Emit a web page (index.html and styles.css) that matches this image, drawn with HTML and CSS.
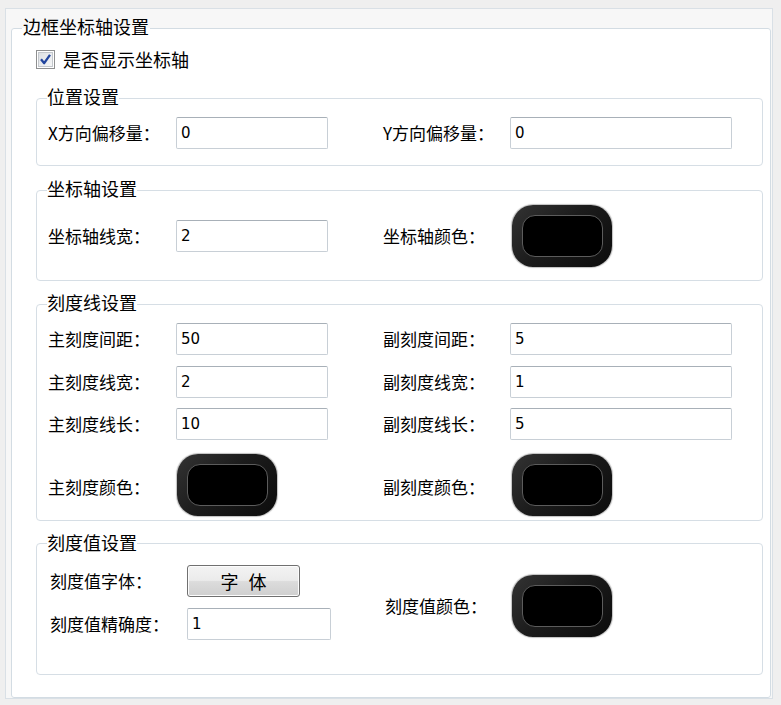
FILE: index.html
```html
<!DOCTYPE html>
<html lang="zh-CN">
<head>
<meta charset="utf-8">
<title>边框坐标轴设置</title>
<link rel="stylesheet" href="styles.css">
</head>
<body>
<div class="panel">
  <fieldset class="outer">
    <legend class="outer-title">边框坐标轴设置</legend>
    <label class="check">
      <svg class="check-box" width="19" height="19" viewBox="0 0 19 19" aria-hidden="true">
        <defs>
          <linearGradient id="cg" x1="0" y1="0" x2="1" y2="1">
            <stop offset="0" stop-color="#dcdfe3"/>
            <stop offset="1" stop-color="#f6f7f8"/>
          </linearGradient>
        </defs>
        <rect x="0.5" y="0.5" width="18" height="18" fill="#fff" stroke="#8e8f90"/>
        <rect x="2.5" y="2.5" width="14" height="14" fill="url(#cg)" stroke="#c3c7cc"/>
        <path d="M5 9.3 L8.2 13.2 L14 4.8" fill="none" stroke="#22459e" stroke-width="2.3" stroke-linejoin="round"/>
      </svg>
      <span>是否显示坐标轴</span>
    </label>

    <fieldset class="group g1">
      <legend class="group-title">位置设置</legend>
      <div class="grid">
        <span class="lbl">X方向偏移量：</span><input class="in" type="text" value="0">
        <span class="lbl">Y方向偏移量：</span><input class="in wide" type="text" value="0">
      </div>
    </fieldset>

    <fieldset class="group g2">
      <legend class="group-title">坐标轴设置</legend>
      <div class="grid grid-c">
        <span class="lbl">坐标轴线宽：</span><input class="in" type="text" value="2">
        <span class="lbl">坐标轴颜色：</span><div class="cbtn"><div class="cbtn-in"></div></div>
      </div>
    </fieldset>

    <fieldset class="group g3">
      <legend class="group-title">刻度线设置</legend>
      <div class="grid grid-3">
        <span class="lbl">主刻度间距：</span><input class="in" type="text" value="50">
        <span class="lbl">副刻度间距：</span><input class="in wide" type="text" value="5">
        <span class="lbl">主刻度线宽：</span><input class="in" type="text" value="2">
        <span class="lbl">副刻度线宽：</span><input class="in wide" type="text" value="1">
        <span class="lbl">主刻度线长：</span><input class="in" type="text" value="10">
        <span class="lbl">副刻度线长：</span><input class="in wide" type="text" value="5">
        <span class="lbl lbl-c">主刻度颜色：</span><div class="cbtn cbtn-l"><div class="cbtn-in"></div></div>
        <span class="lbl lbl-c">副刻度颜色：</span><div class="cbtn cbtn-r"><div class="cbtn-in"></div></div>
      </div>
    </fieldset>

    <fieldset class="group g4">
      <legend class="group-title">刻度值设置</legend>
      <div class="grid4">
        <span class="lbl l4">刻度值字体：</span><button class="fbtn" type="button">字 体</button>
        <span class="lbl l4 r-span">刻度值颜色：</span><div class="cbtn r-span c4"><div class="cbtn-in"></div></div>
        <span class="lbl l4">刻度值精确度：</span><input class="in in4" type="text" value="1">
      </div>
    </fieldset>
  </fieldset>
</div>
</body>
</html>
```

FILE: styles.css
```css
html, body {
  margin: 0;
  padding: 0;
}
body {
  background: #efefef;
  font-family: "Noto Sans CJK SC", "Noto Sans", sans-serif;
  color: #000;
  width: 781px;
  height: 705px;
  overflow: hidden;
}
.panel {
  margin: 8px 8px 0 5px;
  border: 1px solid #d9e0e6;
  background: #f7f7f7;
}
fieldset {
  margin: 0;
  min-width: 0;
}
.outer {
  margin: 7px 1px 0 5px;
  border: 1px solid #d3dce3;
  border-radius: 3px;
  padding: 0 7px 22px 24px;
  background: #fff;
}
.outer-title {
  font-size: 18px;
  line-height: 20px;
  padding: 0 1px 4px;
  margin-left: -14px;
  color: #000;
}
.check {
  display: flex;
  align-items: center;
  gap: 8px;
  height: 20px;
  margin-top: 9px;
  font-size: 18px;
  line-height: 20px;
}
.check-box {
  display: block;
  flex: none;
}
.group {
  border: 1px solid #d6dee5;
  border-radius: 4px;
  padding: 0 7px 16px 11px;
}
.group-title {
  font-size: 18px;
  line-height: 20px;
  padding: 0 0 4px;
  margin-left: -1px;
  color: #000;
}
.g1 { margin-top: 17px; }
.g2 { margin-top: 12px; padding-bottom: 13px; }
.g3 { margin-top: 11px; padding-bottom: 4px; }
.g4 { margin-top: 11px; padding-bottom: 34px; }

.grid {
  display: grid;
  grid-template-columns: 128px 207px 127px 222px;
  grid-auto-rows: 32px;
  align-items: center;
  margin-top: 7px;
}
.grid-c {
  grid-auto-rows: 62px;
  margin-top: 3px;
}
.grid-3 {
  grid-template-rows: 32px 32px 32px 65px;
  row-gap: 10.5px;
}
.lbl {
  font-size: 17px;
  line-height: 20px;
  white-space: nowrap;
  color: #000;
}
.lbl-c {
  align-self: center;
  margin-top: 7px;
}
.in {
  box-sizing: border-box;
  width: 152px;
  height: 32px;
  margin: 0;
  padding: 0 4px;
  border: 1px solid #c8cfd6;
  border-top-color: #a8b0b8;
  border-radius: 2px;
  background: #fff;
  font-family: "DejaVu Sans", "Liberation Sans", sans-serif;
  font-size: 15px;
  color: #000;
  outline: none;
}
.in.wide { width: 222px; }

.cbtn {
  box-sizing: border-box;
  width: 100px;
  height: 62px;
  padding: 10px 9px 10px 10px;
  border-radius: 21px;
  background: linear-gradient(135deg, #333 0%, #1c1c1c 45%, #0c0c0c 100%);
  box-shadow: 0 0 1px 1px rgba(0, 0, 0, 0.25);
  margin-left: 1px;
}
.cbtn-in {
  box-sizing: border-box;
  height: 100%;
  border: 1px solid #5c5c5c;
  border-radius: 13px;
  background: #000;
}
.grid-c .cbtn { margin-left: 2px; }
.cbtn-l { align-self: end; margin-left: 1px; }
.cbtn-r { align-self: end; margin-left: 2px; }

.grid4 {
  display: grid;
  grid-template-columns: 139px 198px 127px 102px;
  grid-template-rows: 32px 32px;
  row-gap: 11px;
  align-items: center;
  margin-top: 9px;
}
.l4 { margin-left: 2px; }
.r-span {
  grid-row: 1 / 3;
  margin-top: 8px;
}
.c4 {
  grid-column: 4;
  margin-left: 0;
  align-self: center;
  margin-top: 8px;
}
.r-span.lbl {
  grid-column: 3;
  margin-left: 0;
}
.in4 { width: 144px; }
.fbtn {
  box-sizing: border-box;
  width: 113px;
  height: 32px;
  margin: 0;
  padding: 0 0 0 3px;
  border: 1px solid #707070;
  border-radius: 3px;
  background: linear-gradient(#f3f3f3 0%, #ebebeb 48%, #dcdcdc 52%, #cfcfcf 100%);
  box-shadow: inset 0 0 0 1px #fcfcfc;
  font-family: "Noto Sans CJK SC", sans-serif;
  font-size: 18px;
  line-height: 20px;
  letter-spacing: 3px;
  color: #000;
}
```
